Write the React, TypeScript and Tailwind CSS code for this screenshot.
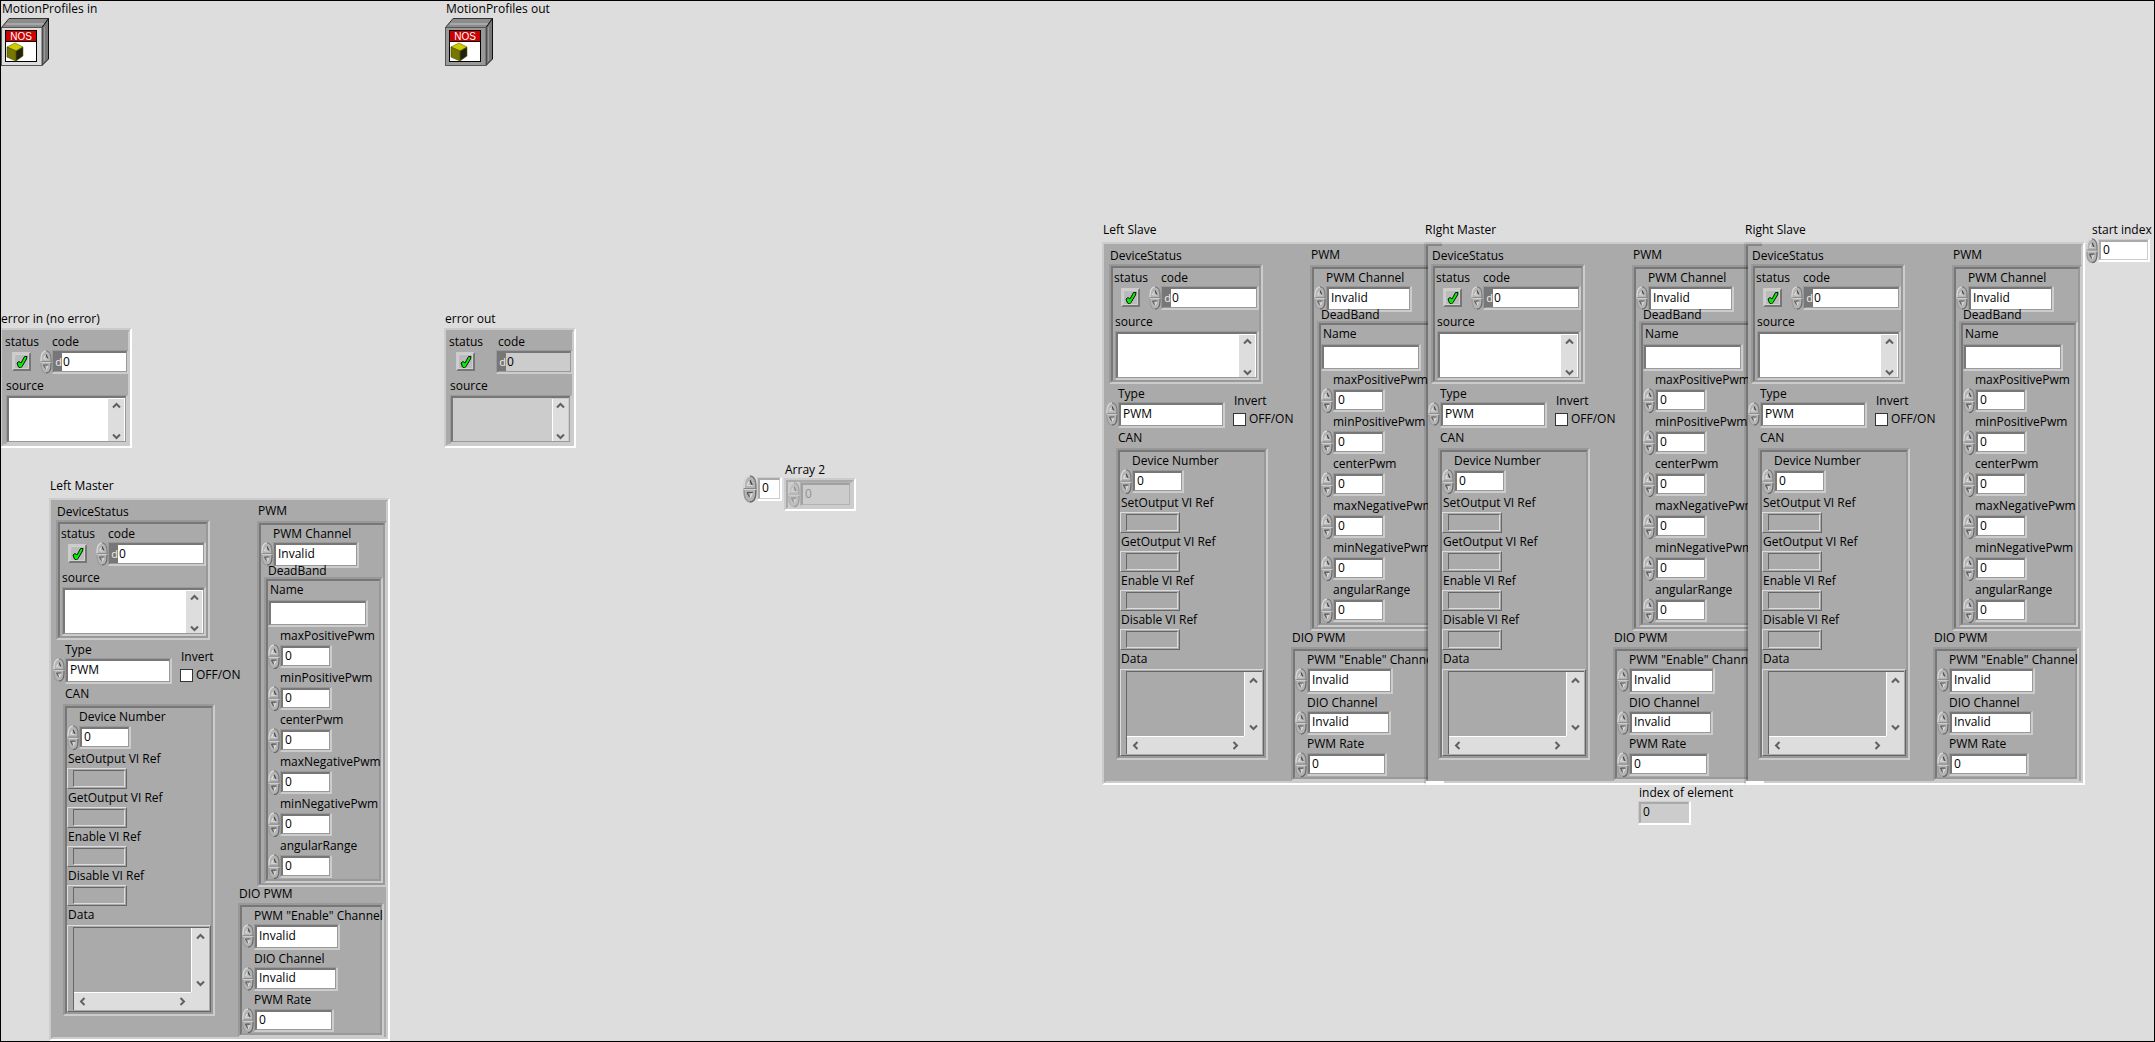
import { useId, type ReactNode } from "react";
import clsx from "clsx";

type Tone = "light" | "dark";

/** Sunken two-step bevel that surrounds a group of controls. */
function Cluster({
  tone = "dark",
  overlapping = false,
  className,
  children,
}: {
  tone?: Tone;
  overlapping?: boolean;
  className?: string;
  children: ReactNode;
}) {
  return (
    <div
      className={clsx(
        "relative border-2",
        tone === "light"
          ? "border-t-[#cccccc] border-r-white border-b-white"
          : "border-t-[#999999] border-r-[#cccccc] border-b-[#cccccc]",
        overlapping ? "border-l-black/10" : tone === "light" ? "border-l-[#cccccc]" : "border-l-[#999999]",
        className,
      )}
    >
      <div
        className={clsx(
          "border-2 bg-[#aaaaaa] bg-clip-padding",
          tone === "light"
            ? "border-t-[#aaaaaa] border-r-[#cccccc] border-b-[#cccccc]"
            : "border-t-[#777777] border-r-[#999999] border-b-[#999999]",
          overlapping ? "border-l-black/30" : tone === "light" ? "border-l-[#aaaaaa]" : "border-l-[#777777]",
        )}
      >
        {children}
      </div>
      {overlapping && (
        <>
          <span className="absolute -top-0.5 left-0 h-1 w-4 border-t-2 border-b-2 border-t-[#bbbbbb] border-b-[#888888]" />
          <span className="absolute -bottom-0.5 left-0 h-1 w-[18px] bg-white" />
        </>
      )}
    </div>
  );
}

/** Bevel around a single value. */
function Well({
  tone = "dark",
  fill = "bg-white",
  className,
  children,
}: {
  tone?: Tone;
  fill?: string;
  className?: string;
  children: ReactNode;
}) {
  return (
    <div
      className={clsx(
        "flex shrink-0 border-t border-r-2 border-b-2 border-l",
        tone === "light"
          ? "border-t-[#cccccc] border-r-white border-b-white border-l-[#cccccc]"
          : "border-t-[#999999] border-r-[#cccccc] border-b-[#cccccc] border-l-[#999999]",
        className,
      )}
    >
      <div
        className={clsx(
          "flex min-w-0 flex-1 border-t-2 border-r border-b border-l-2",
          tone === "light"
            ? "border-t-[#aaaaaa] border-r-[#cccccc] border-b-[#cccccc] border-l-[#aaaaaa]"
            : "border-t-[#777777] border-r-[#999999] border-b-[#999999] border-l-[#777777]",
          fill,
        )}
      >
        {children}
      </div>
    </div>
  );
}

function SpinHalf({ down = false }: { down?: boolean }) {
  return (
    <svg viewBox="0 0 12 12" preserveAspectRatio="none" className={clsx("block h-full w-full", down && "-scale-y-100")}>
      <path d="M0.5 12V9C0.5 3.5 3 .5 6 .5S11.500 3.500 11.500 9V12Z" fill="#b4b4b4" />
      <path d="M1 12V9C1 4 3.200 1 6 1" fill="none" stroke={down ? "#999999" : "#dcdcdc"} strokeWidth="1.200" />
      <path d="M6 .8C9 1 11 4 11 9V12" fill="none" stroke={down ? "#666666" : "#7c7c7c"} strokeWidth="1.200" />
      <path d="M3.500 9L6 4.500" fill="none" stroke={down ? "#555555" : "#e6e6e6"} strokeWidth="1" />
      <path d="M6 4.500L8 9" fill="none" stroke={down ? "#e0e0e0" : "#444444"} strokeWidth="1.200" />
      <path d="M3.500 9H8.500" stroke={down ? "#555555" : "#d8d8d8"} strokeWidth="1" />
      <path d="M.5 11.600H11.500" stroke={down ? "#d8d8d8" : "#808080"} strokeWidth=".8" />
    </svg>
  );
}

function Spinner({ className = "h-6 w-3" }: { className?: string }) {
  return (
    <div className={clsx("flex shrink-0 flex-col", className)}>
      <button type="button" aria-label="Increment" className="block min-h-0 flex-1">
        <SpinHalf />
      </button>
      <button type="button" aria-label="Decrement" className="block min-h-0 flex-1">
        <SpinHalf down />
      </button>
    </div>
  );
}

function Caption({ htmlFor, className, children }: { htmlFor?: string; className?: string; children: ReactNode }) {
  const cls = clsx("block whitespace-nowrap", className);
  return htmlFor ? (
    <label htmlFor={htmlFor} className={cls}>
      {children}
    </label>
  ) : (
    <div className={cls}>{children}</div>
  );
}

const valueClass = "block w-full min-w-0 appearance-none bg-transparent pb-0.5 pl-0.5 outline-none";

function NumberField({
  label,
  size = "h-[23px] w-[52px]",
  captionClass = "pl-3",
  tone,
  className,
}: {
  label: string;
  size?: string;
  captionClass?: string;
  tone?: Tone;
  className?: string;
}) {
  const id = useId();
  return (
    <div className={className}>
      <Caption htmlFor={id} className={captionClass}>
        {label}
      </Caption>
      <div className="flex items-center">
        <Spinner className="h-[25px] w-3" />
        <Well className={size} tone={tone}>
          <input id={id} type="text" defaultValue="0" className={valueClass} />
        </Well>
      </div>
    </div>
  );
}

function EnumField({ label, value, size, className }: { label: string; value: string; size: string; className?: string }) {
  const id = useId();
  return (
    <div className={className}>
      <Caption htmlFor={id} className="pl-3">
        {label}
      </Caption>
      <div className="flex items-start">
        <Spinner />
        <Well className={size}>
          <select id={id} defaultValue={value} className={valueClass}>
            <option>{value}</option>
          </select>
        </Well>
      </div>
    </div>
  );
}

function StatusLight({ id }: { id: string }) {
  return (
    <button
      id={id}
      type="button"
      className="flex size-[19px] items-center justify-center border-2 border-t-[#cccccc] border-r-[#777777] border-b-[#777777] border-l-[#cccccc] bg-[#bbbbbb] outline-1 -outline-offset-3 outline-[#d0d0d0]"
    >
      <svg viewBox="0 0 12 12" className="size-3 shrink-0 overflow-visible">
        <path d="M1 7L3 5.500L5 7L8.500 .5H11L10.500 3L6 10.500L4.500 12L2.500 11Z" fill="#00f000" stroke="#111111" strokeWidth="1" />
      </svg>
    </button>
  );
}

function Chevron({ dir }: { dir: "up" | "down" | "left" | "right" }) {
  const d = {
    up: "M1 6.500L4.500 3L8 6.500",
    down: "M1 2.500L4.500 6L8 2.500",
    left: "M6.500 1L3 4.500L6.500 8",
    right: "M2.500 1L6 4.500L2.500 8",
  }[dir];
  return (
    <svg viewBox="0 0 9 9" className="size-[9px]">
      <path d={d} fill="none" stroke="#606060" strokeWidth="2" />
    </svg>
  );
}

function ScrollColumn({ className }: { className?: string }) {
  return (
    <div className={clsx("flex shrink-0 flex-col items-center justify-between bg-[#dddddd]", className)}>
      <button type="button" aria-label="Scroll up">
        <Chevron dir="up" />
      </button>
      <button type="button" aria-label="Scroll down">
        <Chevron dir="down" />
      </button>
    </div>
  );
}

function ErrorFields({
  codeSize,
  sourceClass,
  statusCol = "w-9",
  indicator = false,
}: {
  codeSize: string;
  sourceClass: string;
  statusCol?: string;
  indicator?: boolean;
}) {
  const id = useId();
  const fill = indicator ? "bg-[#cccccc]" : "bg-white";
  return (
    <>
      <div className="flex">
        <div className={clsx("shrink-0 pl-px", statusCol)}>
          <Caption htmlFor={`${id}-status`}>status</Caption>
          <div className="pt-0.5 pl-[7px]">
            <StatusLight id={`${id}-status`} />
          </div>
        </div>
        <div>
          <Caption htmlFor={`${id}-code`} className={indicator ? "pl-0.5" : "pl-3"}>
            code
          </Caption>
          <div className="flex items-center">
            {!indicator && <Spinner />}
            <Well className={codeSize} fill={fill}>
              <span className="flex w-[7px] shrink-0 items-center justify-end bg-[#777777] text-[11px] text-[#eeeeee]">d</span>
              <input
                id={`${id}-code`}
                type="text"
                defaultValue="0"
                readOnly={indicator}
                className="block w-full min-w-0 bg-transparent pb-px pl-px outline-none"
              />
            </Well>
          </div>
        </div>
      </div>
      <Caption htmlFor={`${id}-source`} className="mt-1 pl-0.5">
        source
      </Caption>
      <Well className={clsx("mt-px ml-0.5 h-[49px]", sourceClass)} fill={fill}>
        <textarea
          id={`${id}-source`}
          readOnly={indicator}
          className="block h-full min-w-0 flex-1 resize-none bg-transparent outline-none"
        />
        <ScrollColumn className={clsx("mt-px mr-px w-4 pt-0.5", indicator && "border-l border-white")} />
      </Well>
    </>
  );
}

function RefBox({ label }: { label: string }) {
  return (
    <div className="mt-px">
      <Caption className="pl-px">{label}</Caption>
      <div className="mt-px h-[21px] w-[60px] border border-t-[#dddddd] border-r-[#666666] border-b-[#666666] border-l-[#dddddd] py-px pr-px pl-[5px]">
        <div className="h-full border border-t-[#666666] border-r-[#dddddd] border-b-[#dddddd] border-l-[#666666]" />
      </div>
    </div>
  );
}

function DataBox() {
  return (
    <div>
      <Caption className="mt-px pl-px">Data</Caption>
      <div className="mt-0.5 w-36 border border-t-[#dddddd] border-r-[#666666] border-b-[#666666] border-l-[#dddddd] py-px pr-px pl-[5px]">
        <div className="border-t border-l border-[#666666]">
          <div className="flex">
            <div className="h-16 flex-1" />
            <ScrollColumn className="w-[18px] border-l border-white py-1" />
          </div>
          <div className="flex h-[18px] items-center bg-[#dddddd]">
            <div className="flex h-full flex-1 items-center justify-between border-t border-white px-1">
              <button type="button" aria-label="Scroll left">
                <Chevron dir="left" />
              </button>
              <button type="button" aria-label="Scroll right">
                <Chevron dir="right" />
              </button>
            </div>
            <div className="w-[18px]" />
          </div>
        </div>
      </div>
    </div>
  );
}

const bandFields = ["maxPositivePwm", "minPositivePwm", "centerPwm", "maxNegativePwm", "minNegativePwm", "angularRange"];

function MotorPanel({ title, overlapping }: { title: string; overlapping?: boolean }) {
  const id = useId();
  return (
    <section>
      <Caption className="mb-1 pl-px">{title}</Caption>
      <Cluster tone="light" overlapping={overlapping} className="w-[341px]">
        <div className="flex items-start">
          <div className="w-[185px] shrink-0 pt-0.5">
            <Caption className="pl-1">DeviceStatus</Caption>
            <Cluster className="ml-[3px] w-[154px]">
              <div className="pt-0.5">
                <ErrorFields codeSize="h-6 w-[98px]" sourceClass="w-36" />
              </div>
            </Cluster>
            <div className="flex items-start">
              <EnumField label="Type" value="PWM" size="h-[26px] w-[107px]" className="mt-0.5" />
              <div className="mt-[9px] ml-2">
                <Caption className="pl-px">Invert</Caption>
                <label className="mt-0.5 flex items-center gap-[3px] whitespace-nowrap">
                  <input type="checkbox" className="size-[13px] shrink-0 appearance-none border border-[#333333] bg-white" />
                  OFF/ON
                </label>
              </div>
            </div>
            <Caption className="mt-0.5 pl-3">CAN</Caption>
            <Cluster className="mt-0.5 ml-2.5 w-[152px]">
              <NumberField label="Device Number" className="pt-px" />
              <RefBox label="SetOutput VI Ref" />
              <RefBox label="GetOutput VI Ref" />
              <RefBox label="Enable VI Ref" />
              <RefBox label="Disable VI Ref" />
              <DataBox />
            </Cluster>
          </div>
          <div className="w-[148px] shrink-0 pt-px">
            <Caption className="pl-5">PWM</Caption>
            <Cluster className="mt-0.5 ml-[19px] w-[130px]">
              <EnumField label="PWM Channel" value="Invalid" size="h-[26px] w-[86px]" className="pt-px" />
              <Caption className="relative -mt-1 pl-[7px] leading-[14px]">DeadBand</Caption>
              <Cluster className="-mt-px ml-[3px] w-[119px]">
                <Caption htmlFor={`${id}-name`} className="pt-px pl-0.5">
                  Name
                </Caption>
                <Well className="mt-0.5 h-[27px] w-[100px]">
                  <input id={`${id}-name`} type="text" className={valueClass} />
                </Well>
                {bandFields.map((f) => (
                  <NumberField key={f} label={f} className="pt-px" />
                ))}
              </Cluster>
            </Cluster>
            <Caption className="-mt-px pl-px">DIO PWM</Caption>
            <Cluster className="mt-px w-[146px]">
              <EnumField label={'PWM "Enable" Channel'} value="Invalid" size="h-[26px] w-[86px]" className="pt-px" />
              <EnumField label="DIO Channel" value="Invalid" size="h-6 w-[84px]" className="pt-px" />
              <NumberField label="PWM Rate" size="h-[23px] w-20" className="pt-px" />
            </Cluster>
          </div>
        </div>
      </Cluster>
    </section>
  );
}

function ObjectRef({ label, face }: { label: string; face: string }) {
  return (
    <div>
      <Caption className="pl-px">{label}</Caption>
      <svg viewBox="0 0 48 48" className="mt-px size-12" role="img" aria-label={label}>
        <path d="M.5 9.500L8 .5H47.500L41 9.500Z" fill="#8c8c8c" stroke="#333333" />
        <path d="M5 6H43" stroke="#a8a8a8" strokeWidth="2" />
        <path d="M41 9.500L47.500 .5V41L41 47.500Z" fill="#777777" stroke="#111111" />
        <path d="M43.500 9V43" stroke="#999999" />
        <rect x=".5" y="9.500" width="40.500" height="38" fill={face} stroke="#555555" />
        <rect x="4.500" y="12.500" width="31" height="31" fill="white" stroke="black" />
        <rect x="5" y="13" width="30" height="10" fill="#cc0000" />
        <path d="M5 23.500H35" stroke="black" />
        <text x="20" y="21.500" textAnchor="middle" fontSize="10" fill="white" fontFamily="Liberation Sans, sans-serif">
          NOS
        </text>
        <path d="M6 29L14 25L22 29L15 33Z" fill="#cccc00" stroke="#666600" strokeWidth=".6" />
        <path d="M6 29L15 33V43L6 39Z" fill="#777700" stroke="#444400" strokeWidth=".6" />
        <path d="M15 33L22 29V38L15 43Z" fill="#222211" stroke="#666600" strokeWidth=".6" />
      </svg>
    </div>
  );
}

function ArrayControl() {
  const id = useId();
  return (
    <div className="flex items-start">
      <div className="flex items-center pt-[13px]">
        <Spinner className="h-7 w-3.5" />
        <Well tone="light" className="h-6 w-[25px]">
          <input aria-label="Array 2 index" type="text" defaultValue="0" className={valueClass} />
        </Well>
      </div>
      <div className="ml-0.5">
        <Caption htmlFor={id} className="pl-px">
          Array 2
        </Caption>
        <div className="flex border-2 border-t-[#cccccc] border-r-white border-b-white border-l-[#cccccc]">
          <div className="flex items-center border-2 border-t-[#aaaaaa] border-r-[#cccccc] border-b-[#cccccc] border-l-[#aaaaaa] bg-[#cccccc]">
            <div className="flex opacity-50">
              <Spinner className="h-[25px] w-3" />
              <Well className="h-[25px] w-[52px]" fill="bg-[#cccccc]">
                <input id={id} type="text" defaultValue="0" disabled className={clsx(valueClass, "text-[#555555]")} />
              </Well>
            </div>
          </div>
        </div>
      </div>
    </div>
  );
}

function ErrorCluster({ title, indicator }: { title: string; indicator?: boolean }) {
  return (
    <section>
      <Caption className="mb-px pl-px">{title}</Caption>
      <Cluster tone="light" className="w-[132px]">
        <div className="pt-0.5">
          <ErrorFields
            indicator={indicator}
            statusCol={indicator ? "w-12" : "w-9"}
            codeSize={indicator ? "h-6 w-[77px]" : "h-6 w-[77px]"}
            sourceClass="w-[122px]"
          />
        </div>
      </Cluster>
    </section>
  );
}

export default function App() {
  const id = useId();
  return (
    <main className="relative min-h-screen w-full overflow-hidden bg-[#dddddd] font-['Open_Sans',sans-serif] text-[12px] leading-4 text-black after:pointer-events-none after:absolute after:inset-0 after:border after:border-black">
      <div className="absolute top-px left-px">
        <ObjectRef label="MotionProfiles in" face="#dddddd" />
      </div>
      <div className="absolute top-px left-[445px]">
        <ObjectRef label="MotionProfiles out" face="#999999" />
      </div>
      <div className="absolute top-[311px] left-0">
        <ErrorCluster title="error in (no error)" />
      </div>
      <div className="absolute top-[311px] left-[444px]">
        <ErrorCluster title="error out" indicator />
      </div>
      <div className="absolute top-[478px] left-[49px]">
        <MotorPanel title="Left Master" />
      </div>
      <div className="absolute top-[462px] left-[743px]">
        <ArrayControl />
      </div>
      <div className="absolute top-[222px] left-[1102px]">
        <MotorPanel title="Left Slave" />
      </div>
      <div className="absolute top-[222px] left-[1424px]">
        <MotorPanel title="RIght Master" overlapping />
      </div>
      <div className="absolute top-[222px] left-[1744px]">
        <MotorPanel title="Right Slave" overlapping />
      </div>
      <div className="absolute top-[785px] left-[1638px]">
        <Caption htmlFor={id} className="pl-px">
          index of element
        </Caption>
        <Well tone="light" fill="bg-[#cccccc]" className="h-6 w-[53px]">
          <input id={id} type="text" defaultValue="0" readOnly className={valueClass} />
        </Well>
      </div>
      <div className="absolute top-[222px] left-[2086px]">
        <NumberField label="start index" tone="light" captionClass="pl-1.5" />
      </div>
    </main>
  );
}
